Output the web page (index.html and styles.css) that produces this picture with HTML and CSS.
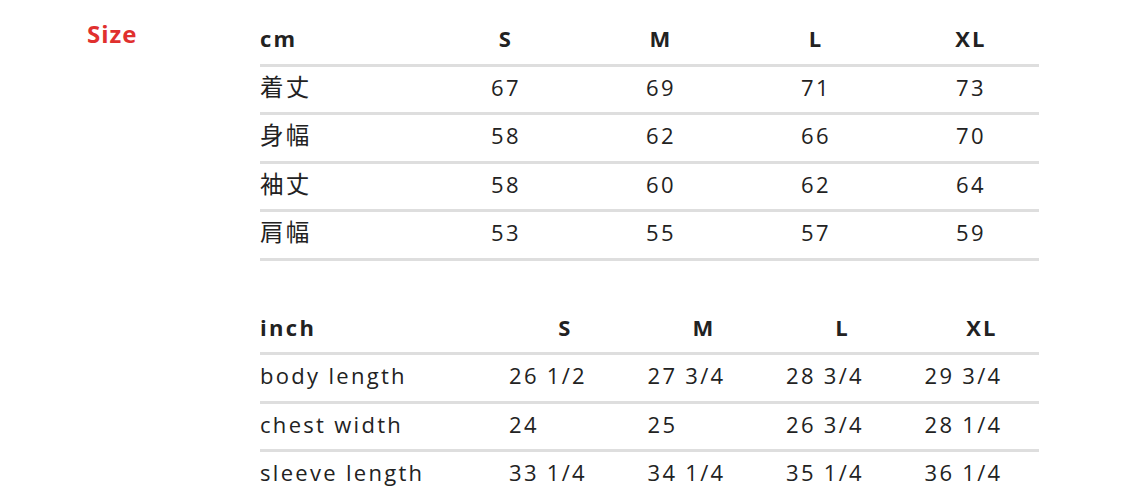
FILE: index.html
```html
<!DOCTYPE html>
<html lang="ja">
<head>
<meta charset="utf-8">
<title>Size</title>
<link rel="stylesheet" href="styles.css">
</head>
<body>
<div class="page">
  <div class="side"><h2 class="title">Size</h2></div>
  <div class="tables">
    <div class="tbl cm">
      <div class="row head"><span class="label">cm</span><span>S</span><span>M</span><span>L</span><span class="last">XL</span></div>
      <div class="row"><span class="label jp">着丈</span><span>67</span><span>69</span><span>71</span><span class="last">73</span></div>
      <div class="row"><span class="label jp">身幅</span><span>58</span><span>62</span><span>66</span><span class="last">70</span></div>
      <div class="row"><span class="label jp">袖丈</span><span>58</span><span>60</span><span>62</span><span class="last">64</span></div>
      <div class="row"><span class="label jp">肩幅</span><span>53</span><span>55</span><span>57</span><span class="last">59</span></div>
    </div>
    <div class="tbl inch">
      <div class="row head"><span class="label">inch</span><span>S</span><span>M</span><span>L</span><span>XL</span></div>
      <div class="row"><span class="label">body length</span><span>26 1/2</span><span>27 3/4</span><span>28 3/4</span><span>29 3/4</span></div>
      <div class="row"><span class="label">chest width</span><span>24</span><span>25</span><span>26 3/4</span><span>28 1/4</span></div>
      <div class="row"><span class="label">sleeve length</span><span>33 1/4</span><span>34 1/4</span><span>35 1/4</span><span>36 1/4</span></div>
    </div>
  </div>
</div>
</body>
</html>
```

FILE: styles.css
```css
html, body {
  margin: 0;
  background: #ffffff;
}
body {
  font-family: "Open Sans", "Noto Sans CJK JP", sans-serif;
  color: #222222;
}
.page {
  display: flex;
  padding-top: 18px;
}
.side {
  width: 260px;
  padding-left: 87px;
  box-sizing: border-box;
  flex: none;
}
.title {
  margin: 0;
  padding-top: 4px;
  font-size: 24px;
  line-height: 1;
  font-weight: 700;
  color: #e0302e;
  letter-spacing: 1px;
}
.tables {
  width: 779px;
  flex: none;
}
.row {
  display: grid;
  height: 41.5px;
  padding-bottom: 4px;
  align-items: center;
  border-bottom: 3px solid #dedede;
  font-size: 22px;
  line-height: 1.3;
  letter-spacing: 2.3px;
}
.head {
  font-weight: 700;
}
.cm .row {
  grid-template-columns: 168.5px 155px 155px 155px 145.5px;
}
.cm .row span {
  text-align: center;
}
.cm .row span.label {
  text-align: left;
}
.cm .row span.jp {
  font-size: 23.5px;
}
.cm .row span.last {
  padding-left: 9.5px;
}
.inch {
  margin-top: 46px;
}
.inch .row {
  grid-template-columns: 223.5px 113px 113px 113px 115px;
  column-gap: 25.5px;
}
.inch .head span {
  text-align: center;
}
.inch .head span.label {
  text-align: left;
}
```
